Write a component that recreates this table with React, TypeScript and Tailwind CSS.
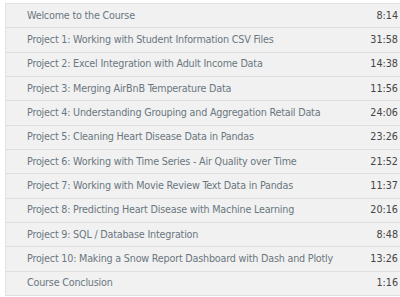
const lectures = [
	{ title: "Welcome to the Course", time: "8:14" },
	{ title: "Project 1: Working with Student Information CSV Files", time: "31:58" },
	{ title: "Project 2: Excel Integration with Adult Income Data", time: "14:38" },
	{ title: "Project 3: Merging AirBnB Temperature Data", time: "11:56" },
	{ title: "Project 4: Understanding Grouping and Aggregation Retail Data", time: "24:06" },
	{ title: "Project 5: Cleaning Heart Disease Data in Pandas", time: "23:26" },
	{ title: "Project 6: Working with Time Series - Air Quality over Time", time: "21:52" },
	{ title: "Project 7: Working with Movie Review Text Data in Pandas", time: "11:37" },
	{ title: "Project 8: Predicting Heart Disease with Machine Learning", time: "20:16" },
	{ title: "Project 9: SQL / Database Integration", time: "8:48" },
	{ title: "Project 10: Making a Snow Report Dashboard with Dash and Plotly", time: "13:26" },
	{ title: "Course Conclusion", time: "1:16" },
]

const App = () => {
	return (
		<div className="w-[400px] h-[297px] bg-white pl-[5px] pt-[3px] overflow-hidden font-['DejaVu_Sans_Condensed',sans-serif]">
			<div className="border-t border-l border-[#e2e2e2] bg-[#f1f1f1]">
				{lectures.map((lecture) => (
					<div
						key={lecture.title}
						className="h-[24.33px] flex items-center justify-between pl-[21px] pr-[2px] border-b border-[#dedede] text-[10.7px]"
					>
						<span className="text-[#6b7780] tracking-[-0.2px]">{lecture.title}</span>
						<span className="text-[#444]">{lecture.time}</span>
					</div>
				))}
			</div>
		</div>
	)
}

export default App
